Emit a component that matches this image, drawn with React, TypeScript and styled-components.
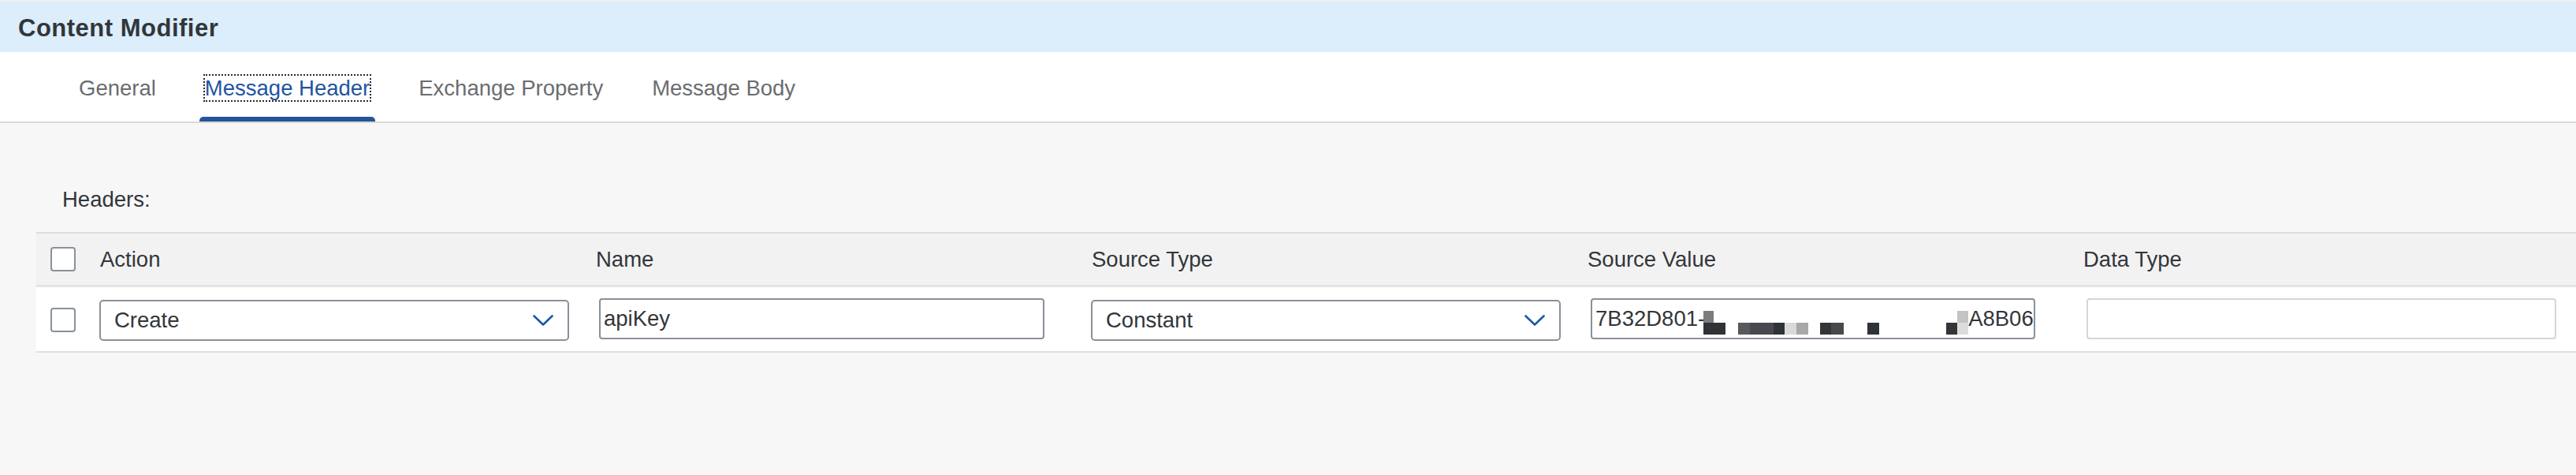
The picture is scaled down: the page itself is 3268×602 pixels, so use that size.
import React from "react";
import styled, { createGlobalStyle } from "styled-components";

const GlobalStyle = createGlobalStyle`
  html, body {
    margin: 0;
    padding: 0;
    background: #f7f7f7;
  }
  body {
    font-family: "Liberation Sans", Arial, sans-serif;
    color: #32363a;
  }
  * { box-sizing: border-box; }
`;

const Page = styled.div`
  min-height: 100vh;
  background: #f7f7f7;
  overflow: hidden;
`;

const TitleBar = styled.header`
  height: 66px;
  border-top: 2px solid #eef0f3;
  background: #dcedfc;
  display: flex;
  align-items: center;
  padding: 3px 0 0 23px;
`;

const Title = styled.h1`
  margin: 0;
  font-size: 31px;
  font-weight: 700;
  letter-spacing: 0.5px;
  color: #32363a;
`;

const TabBar = styled.nav`
  height: 90px;
  background: #ffffff;
  border-bottom: 2px solid #d9d9d9;
  display: flex;
  gap: 48px;
  padding-left: 93px;
`;

const Tab = styled.div<{ $active?: boolean }>`
  position: relative;
  height: 88px;
  padding: 2px 7px 0;
  display: flex;
  align-items: center;
  font-size: 27.5px;
  color: ${(p) => (p.$active ? "#1f55a0" : "#6a6d70")};
`;

const TabLabel = styled.span<{ $focused?: boolean }>`
  line-height: 31px;
  outline: ${(p) => (p.$focused ? "2px dotted #2b2b2b" : "none")};
  outline-offset: 0px;
`;

const TabIndicator = styled.span`
  position: absolute;
  left: 0;
  right: 0;
  bottom: 0;
  height: 6px;
  background: #24549b;
  border-radius: 5px 5px 0 0;
`;

const Content = styled.section`
  padding: 81px 0 0 46px;
`;

const SectionLabel = styled.div`
  margin-left: 33px;
  font-size: 27.5px;
  line-height: 32px;
  color: #32363a;
`;

const Table = styled.div`
  margin-top: 25px;
  border-top: 2px solid #dcdcdc;
`;

const Row = styled.div<{ $head?: boolean }>`
  display: grid;
  grid-template-columns: 81px repeat(4, 629px) 1fr;
  align-items: center;
  height: ${(p) => (p.$head ? "68px" : "83px")};
  padding-top: ${(p) => (p.$head ? "0" : "2px")};
  background: ${(p) => (p.$head ? "#f2f2f2" : "#ffffff")};
  border-bottom: ${(p) => (p.$head ? "3px solid #e4e4e4" : "2px solid #e0e0e0")};
`;

const CheckCell = styled.div`
  padding-left: 18px;
  display: flex;
  align-items: center;
`;

const Checkbox = styled.span`
  display: block;
  width: 32px;
  height: 31px;
  border: 2px solid #89919a;
  border-radius: 4px;
  background: #ffffff;
`;

const HeadCell = styled.div`
  font-size: 27.5px;
  color: #32363a;
  white-space: nowrap;
`;

const Cell = styled.div`
  display: flex;
  align-items: center;
`;

const Select = styled.div`
  width: 596px;
  height: 52px;
  margin-left: -1px;
  border: 2px solid #89919a;
  border-radius: 5px;
  background: #ffffff;
  display: flex;
  align-items: center;
  justify-content: space-between;
  padding: 0 18px 0 17px;
  font-size: 27.5px;
  color: #32363a;
`;

const TextBox = styled.div<{ $w: number; $light?: boolean }>`
  width: ${(p) => p.$w}px;
  height: 52px;
  margin: 0 0 3px 4px;
  border: 2px solid ${(p) => (p.$light ? "#d3d6da" : "#89919a")};
  border-radius: 4px;
  background: #ffffff;
  display: flex;
  align-items: center;
  padding-left: 4px;
  overflow: hidden;
  white-space: nowrap;
  font-size: 27.5px;
  color: #32363a;
`;

const Redacted = styled.svg`
  flex: none;
  margin-top: 9px;
  margin-left: -2px;
`;

const Chevron = () => (
  <svg width="26" height="14" viewBox="0 0 26 14" fill="none">
    <polyline
      points="1.5,1.5 13,12.5 24.5,1.5"
      stroke="#1c5aa6"
      strokeWidth="2.6"
      strokeLinecap="round"
      strokeLinejoin="round"
    />
  </svg>
);

const blocks: { x: number; y: number; w: number; h: number; c: string }[] = [
  { x: 0, y: 0, w: 13, h: 15, c: "#7c7c7c" },
  { x: 0, y: 15, w: 28, h: 15, c: "#2f3236" },
  { x: 44, y: 15, w: 15, h: 15, c: "#57595c" },
  { x: 59, y: 15, w: 30, h: 15, c: "#46494d" },
  { x: 89, y: 15, w: 14, h: 15, c: "#2f3236" },
  { x: 103, y: 15, w: 15, h: 15, c: "#d9d9d9" },
  { x: 118, y: 15, w: 15, h: 15, c: "#a8a8a8" },
  { x: 148, y: 15, w: 14, h: 15, c: "#333538" },
  { x: 162, y: 15, w: 16, h: 15, c: "#47494c" },
  { x: 208, y: 15, w: 15, h: 15, c: "#2f3236" },
  { x: 308, y: 15, w: 14, h: 15, c: "#333538" },
  { x: 322, y: 15, w: 14, h: 15, c: "#dcdcdc" },
  { x: 322, y: 0, w: 14, h: 15, c: "#c4c4c4" },
];

const tabs = ["General", "Message Header", "Exchange Property", "Message Body"];
const columns = ["Action", "Name", "Source Type", "Source Value", "Data Type"];

export default function App() {
  return (
    <Page>
      <GlobalStyle />
      <TitleBar>
        <Title>Content Modifier</Title>
      </TitleBar>
      <TabBar>
        {tabs.map((t) => {
          const active = t === "Message Header";
          return (
            <Tab key={t} $active={active}>
              <TabLabel $focused={active}>{t}</TabLabel>
              {active && <TabIndicator />}
            </Tab>
          );
        })}
      </TabBar>
      <Content>
        <SectionLabel>Headers:</SectionLabel>
        <Table>
          <Row $head>
            <CheckCell>
              <Checkbox />
            </CheckCell>
            {columns.map((c) => (
              <HeadCell key={c}>{c}</HeadCell>
            ))}
          </Row>
          <Row>
            <CheckCell>
              <Checkbox />
            </CheckCell>
            <Cell>
              <Select>
                <span>Create</span>
                <Chevron />
              </Select>
            </Cell>
            <Cell>
              <TextBox $w={565}>apiKey</TextBox>
            </Cell>
            <Cell>
              <Select>
                <span>Constant</span>
                <Chevron />
              </Select>
            </Cell>
            <Cell>
              <TextBox $w={564}>
                <span>7B32D801-</span>
                <Redacted width="336" height="30" viewBox="0 0 336 30">
                  {blocks.map((b, i) => (
                    <rect key={i} x={b.x} y={b.y} width={b.w} height={b.h} fill={b.c} />
                  ))}
                </Redacted>
                <span>A8B06</span>
              </TextBox>
            </Cell>
            <Cell>
              <TextBox $w={596} $light />
            </Cell>
          </Row>
        </Table>
      </Content>
    </Page>
  );
}
